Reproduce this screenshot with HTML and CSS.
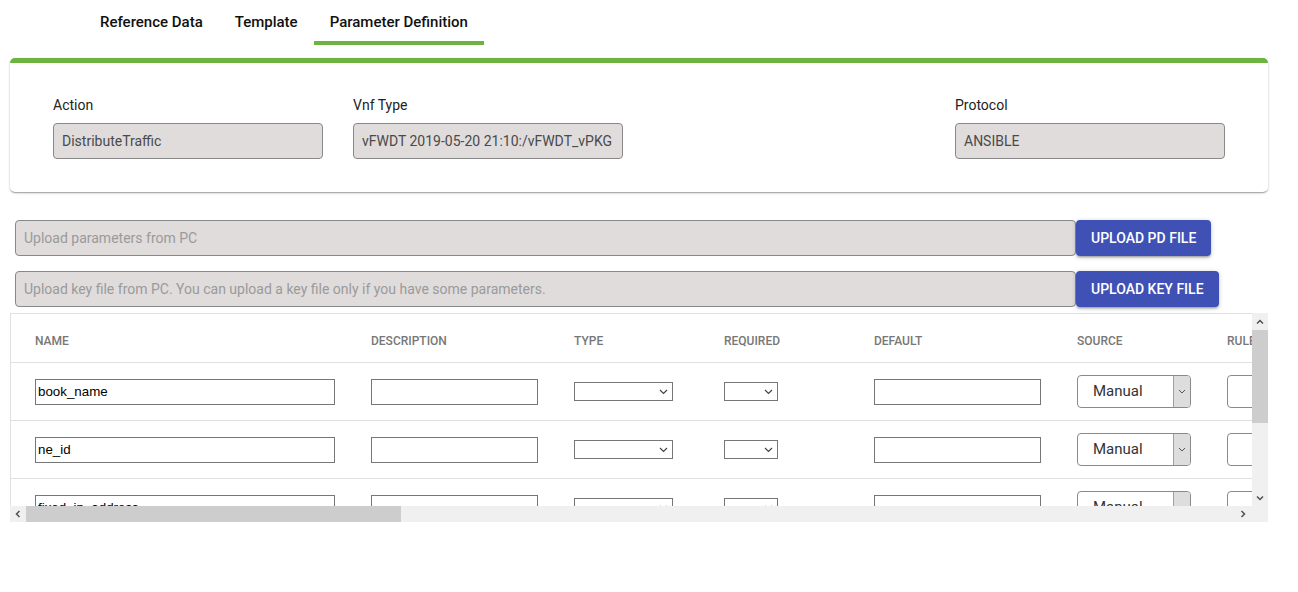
FILE: index.html
```html
<!DOCTYPE html>
<html>
<head>
<meta charset="utf-8">
<link rel="stylesheet" href="styles.css">
</head>
<body>
<nav class="tabs">
  <div class="tab">Reference Data</div>
  <div class="tab">Template</div>
  <div class="tab active">Parameter Definition</div>
</nav>

<section class="card">
  <div class="field">
    <div class="label">Action</div>
    <input class="ro" value="DistributeTraffic" readonly>
  </div>
  <div class="field">
    <div class="label">Vnf Type</div>
    <input class="ro" value="vFWDT 2019-05-20 21:10:/vFWDT_vPKG" readonly>
  </div>
  <div class="field">
    <div class="label">Protocol</div>
    <input class="ro" value="ANSIBLE" readonly>
  </div>
</section>

<section class="uploads">
  <div class="uprow">
    <input class="upin" placeholder="Upload parameters from PC" readonly>
    <button class="btn">Upload PD File</button>
  </div>
  <div class="uprow">
    <input class="upin" placeholder="Upload key file from PC. You can upload a key file only if you have some parameters." readonly>
    <button class="btn">Upload Key File</button>
  </div>
</section>

<section class="tablewrap">
  <div class="viewport">
    <div class="grid">
      <div class="row head">
        <div class="c c1">NAME</div>
        <div class="c c2">DESCRIPTION</div>
        <div class="c c3">TYPE</div>
        <div class="c c4">REQUIRED</div>
        <div class="c c5">DEFAULT</div>
        <div class="c c6">SOURCE</div>
        <div class="c c7">RULE TYPE</div>
        <div class="c c8">REQUEST KEYS</div>
        <div class="c c8">RESPONSE KEYS</div>
      </div>

      <div class="row">
        <div class="c c1"><input class="ti tname" value="book_name"></div>
        <div class="c c2"><input class="ti tdesc"></div>
        <div class="c c3"><div class="sel stype"><svg width="9" height="6" viewBox="0 0 9 6"><path d="M1 1l3.5 3.5L8 1" fill="none" stroke="#444" stroke-width="1.2"/></svg></div></div>
        <div class="c c4"><div class="sel sreq"><svg width="9" height="6" viewBox="0 0 9 6"><path d="M1 1l3.5 3.5L8 1" fill="none" stroke="#444" stroke-width="1.2"/></svg></div></div>
        <div class="c c5"><input class="ti tdesc"></div>
        <div class="c c6"><div class="src"><span class="srctext">Manual</span><span class="srcbtn"><svg width="8" height="5" viewBox="0 0 8 5"><path d="M1 1l3 3 3-3" fill="none" stroke="#555" stroke-width="1"/></svg></span></div></div>
        <div class="c c7"><div class="rule"></div></div>
        <div class="c c8"></div>
        <div class="c c8"></div>
      </div>

      <div class="row">
        <div class="c c1"><input class="ti tname" value="ne_id"></div>
        <div class="c c2"><input class="ti tdesc"></div>
        <div class="c c3"><div class="sel stype"><svg width="9" height="6" viewBox="0 0 9 6"><path d="M1 1l3.5 3.5L8 1" fill="none" stroke="#444" stroke-width="1.2"/></svg></div></div>
        <div class="c c4"><div class="sel sreq"><svg width="9" height="6" viewBox="0 0 9 6"><path d="M1 1l3.5 3.5L8 1" fill="none" stroke="#444" stroke-width="1.2"/></svg></div></div>
        <div class="c c5"><input class="ti tdesc"></div>
        <div class="c c6"><div class="src"><span class="srctext">Manual</span><span class="srcbtn"><svg width="8" height="5" viewBox="0 0 8 5"><path d="M1 1l3 3 3-3" fill="none" stroke="#555" stroke-width="1"/></svg></span></div></div>
        <div class="c c7"><div class="rule"></div></div>
        <div class="c c8"></div>
        <div class="c c8"></div>
      </div>

      <div class="row">
        <div class="c c1"><input class="ti tname" value="fixed_ip_address"></div>
        <div class="c c2"><input class="ti tdesc"></div>
        <div class="c c3"><div class="sel stype"><svg width="9" height="6" viewBox="0 0 9 6"><path d="M1 1l3.5 3.5L8 1" fill="none" stroke="#444" stroke-width="1.2"/></svg></div></div>
        <div class="c c4"><div class="sel sreq"><svg width="9" height="6" viewBox="0 0 9 6"><path d="M1 1l3.5 3.5L8 1" fill="none" stroke="#444" stroke-width="1.2"/></svg></div></div>
        <div class="c c5"><input class="ti tdesc"></div>
        <div class="c c6"><div class="src"><span class="srctext">Manual</span><span class="srcbtn"><svg width="8" height="5" viewBox="0 0 8 5"><path d="M1 1l3 3 3-3" fill="none" stroke="#555" stroke-width="1"/></svg></span></div></div>
        <div class="c c7"><div class="rule"></div></div>
        <div class="c c8"></div>
        <div class="c c8"></div>
      </div>
    </div>
  </div>

  <div class="vbar">
    <div class="sbtn"><svg width="8" height="6" viewBox="0 0 8 6"><path d="M1 4.5L4 1.5l3 3" fill="none" stroke="#505050" stroke-width="1.5"/></svg></div>
    <div class="vthumb"></div>
    <div class="spacer"></div>
    <div class="sbtn"><svg width="8" height="6" viewBox="0 0 8 6"><path d="M1 1.5L4 4.5l3-3" fill="none" stroke="#505050" stroke-width="1.5"/></svg></div>
    <div class="corner"></div>
  </div>

  <div class="hbar">
    <div class="hbtn"><svg width="6" height="8" viewBox="0 0 6 8"><path d="M4.5 1L1.5 4l3 3" fill="none" stroke="#505050" stroke-width="1.5"/></svg></div>
    <div class="hthumb"></div>
    <div class="spacer"></div>
    <div class="hbtn hright"><svg width="6" height="8" viewBox="0 0 6 8"><path d="M1.5 1l3 3-3 3" fill="none" stroke="#505050" stroke-width="1.5"/></svg></div>
  </div>
</section>
</body>
</html>
```
FILE: styles.css
```css
* { box-sizing: border-box; }

body {
  margin: 0;
  font-family: Roboto, "Liberation Sans", Arial, sans-serif;
  color: #222;
  background: #fff;
}

/* Tabs */
.tabs {
  display: flex;
  height: 45px;
  padding-left: 84px;
}
.tab {
  padding: 13px 16px 0;
  height: 45px;
  font-size: 15px;
  line-height: 18px;
  font-weight: 500;
  color: #111;
  border-bottom: 4px solid transparent;
}
.tab.active {
  border-bottom-color: #6db33f;
}

/* Card */
.card {
  margin: 13px 30px 0 10px;
  border-top: 5px solid #6db33f;
  border-radius: 5px;
  background: #fff;
  box-shadow: 0 1px 3px 0 rgba(0,0,0,.2), 0 1px 1px 0 rgba(0,0,0,.14), 0 2px 1px -1px rgba(0,0,0,.12);
  display: grid;
  grid-template-columns: 300px 602px 1fr;
  padding: 34px 0 33px 43px;
}
.label {
  font-size: 14px;
  line-height: 16px;
  color: #222;
  margin-bottom: 10px;
}
.ro {
  display: block;
  width: 270px;
  height: 36px;
  border: 1px solid #888;
  border-radius: 4px;
  background: #e0dcdc;
  padding: 0 8px;
  font-family: Roboto, sans-serif;
  font-size: 14px;
  color: #4a4a4a;
  outline: none;
}

/* Uploads */
.uploads {
  margin-top: 28px;
  padding-left: 15px;
  display: flex;
  flex-direction: column;
  gap: 15px;
}
.uprow {
  display: flex;
  align-items: stretch;
  height: 36px;
}
.upin {
  width: 1061px;
  height: 36px;
  border: 1px solid #888;
  border-radius: 4px;
  background: #e0dcdc;
  padding: 0 8px;
  font-family: Roboto, sans-serif;
  font-size: 14px;
  outline: none;
}
.upin::placeholder { color: #9a9a9a; }
.btn {
  height: 36px;
  padding: 0 15px;
  border: none;
  border-radius: 4px;
  background: #3f51b5;
  color: #fff;
  font-family: Roboto, sans-serif;
  font-size: 14px;
  font-weight: 500;
  text-transform: uppercase;
  letter-spacing: 0;
  box-shadow: 0 1px 5px 0 rgba(0,0,0,.2), 0 2px 2px 0 rgba(0,0,0,.14), 0 3px 1px -2px rgba(0,0,0,.12);
}

/* Table with scrollbars */
.tablewrap {
  margin: 6px 30px 0 10px;
  display: grid;
  grid-template-columns: 1fr 16px;
  grid-template-rows: 193px 16px;
}
.viewport {
  grid-column: 1;
  grid-row: 1;
  overflow: hidden;
  border-top: 1px solid #e0e0e0;
  border-left: 1px solid #e0e0e0;
}
.grid { width: 3800px; }
.row {
  display: flex;
  height: 58px;
  border-bottom: 1px solid #e0e0e0;
  align-items: center;
}
.row.head {
  height: 49px;
  align-items: flex-end;
  padding-bottom: 14px;
}
.c {
  flex: none;
  padding-left: 24px;
  display: flex;
  align-items: center;
}
.head .c {
  font-size: 12px;
  line-height: 14px;
  font-weight: 500;
  color: #777;
}
.c1 { width: 336px; }
.c2 { width: 203px; }
.c3 { width: 150px; }
.c4 { width: 150px; }
.c5 { width: 203px; }
.c6 { width: 150px; }
.c7 { width: 300px; }
.c8 { width: 300px; }

.ti {
  height: 26px;
  border: 1px solid #767676;
  padding: 0 2px;
  font-family: "Liberation Sans", Arial, sans-serif;
  font-size: 13.33px;
  color: #000;
  background: #fff;
  outline: none;
  border-radius: 0;
}
.tname { width: 300px; }
.tdesc { width: 167px; }

.sel {
  height: 19px;
  border: 1px solid #767676;
  display: flex;
  align-items: center;
  justify-content: flex-end;
  padding-right: 4px;
  background: #fff;
}
.stype { width: 99px; }
.sreq { width: 54px; }

.src {
  width: 114px;
  height: 33px;
  border: 1px solid #8a8a8a;
  border-radius: 4px;
  display: flex;
  overflow: hidden;
  background: #fff;
}
.srctext {
  flex: 1;
  padding-left: 15px;
  font-size: 15px;
  line-height: 31px;
  color: #333;
}
.srcbtn {
  width: 17px;
  background: #dddddd;
  border-left: 1px solid #a0a0a0;
  display: flex;
  align-items: center;
  justify-content: center;
}
.rule {
  width: 114px;
  height: 33px;
  border: 1px solid #8a8a8a;
  border-radius: 4px;
}

.vbar {
  grid-column: 2;
  grid-row: 1 / span 2;
  background: #f0f0f0;
  display: flex;
  flex-direction: column;
}
.sbtn {
  height: 17px;
  display: flex;
  align-items: center;
  justify-content: center;
}
.vthumb {
  height: 93px;
  background: #cdcdcd;
}
.spacer { flex: 1; }
.corner { height: 16px; }

.hbar {
  grid-column: 1;
  grid-row: 2;
  background: #f0f0f0;
  display: flex;
}
.hbtn {
  width: 16px;
  display: flex;
  align-items: center;
  justify-content: center;
}
.hbtn.hright { width: 19px; }
.hthumb {
  width: 375px;
  background: #cdcdcd;
}
```
